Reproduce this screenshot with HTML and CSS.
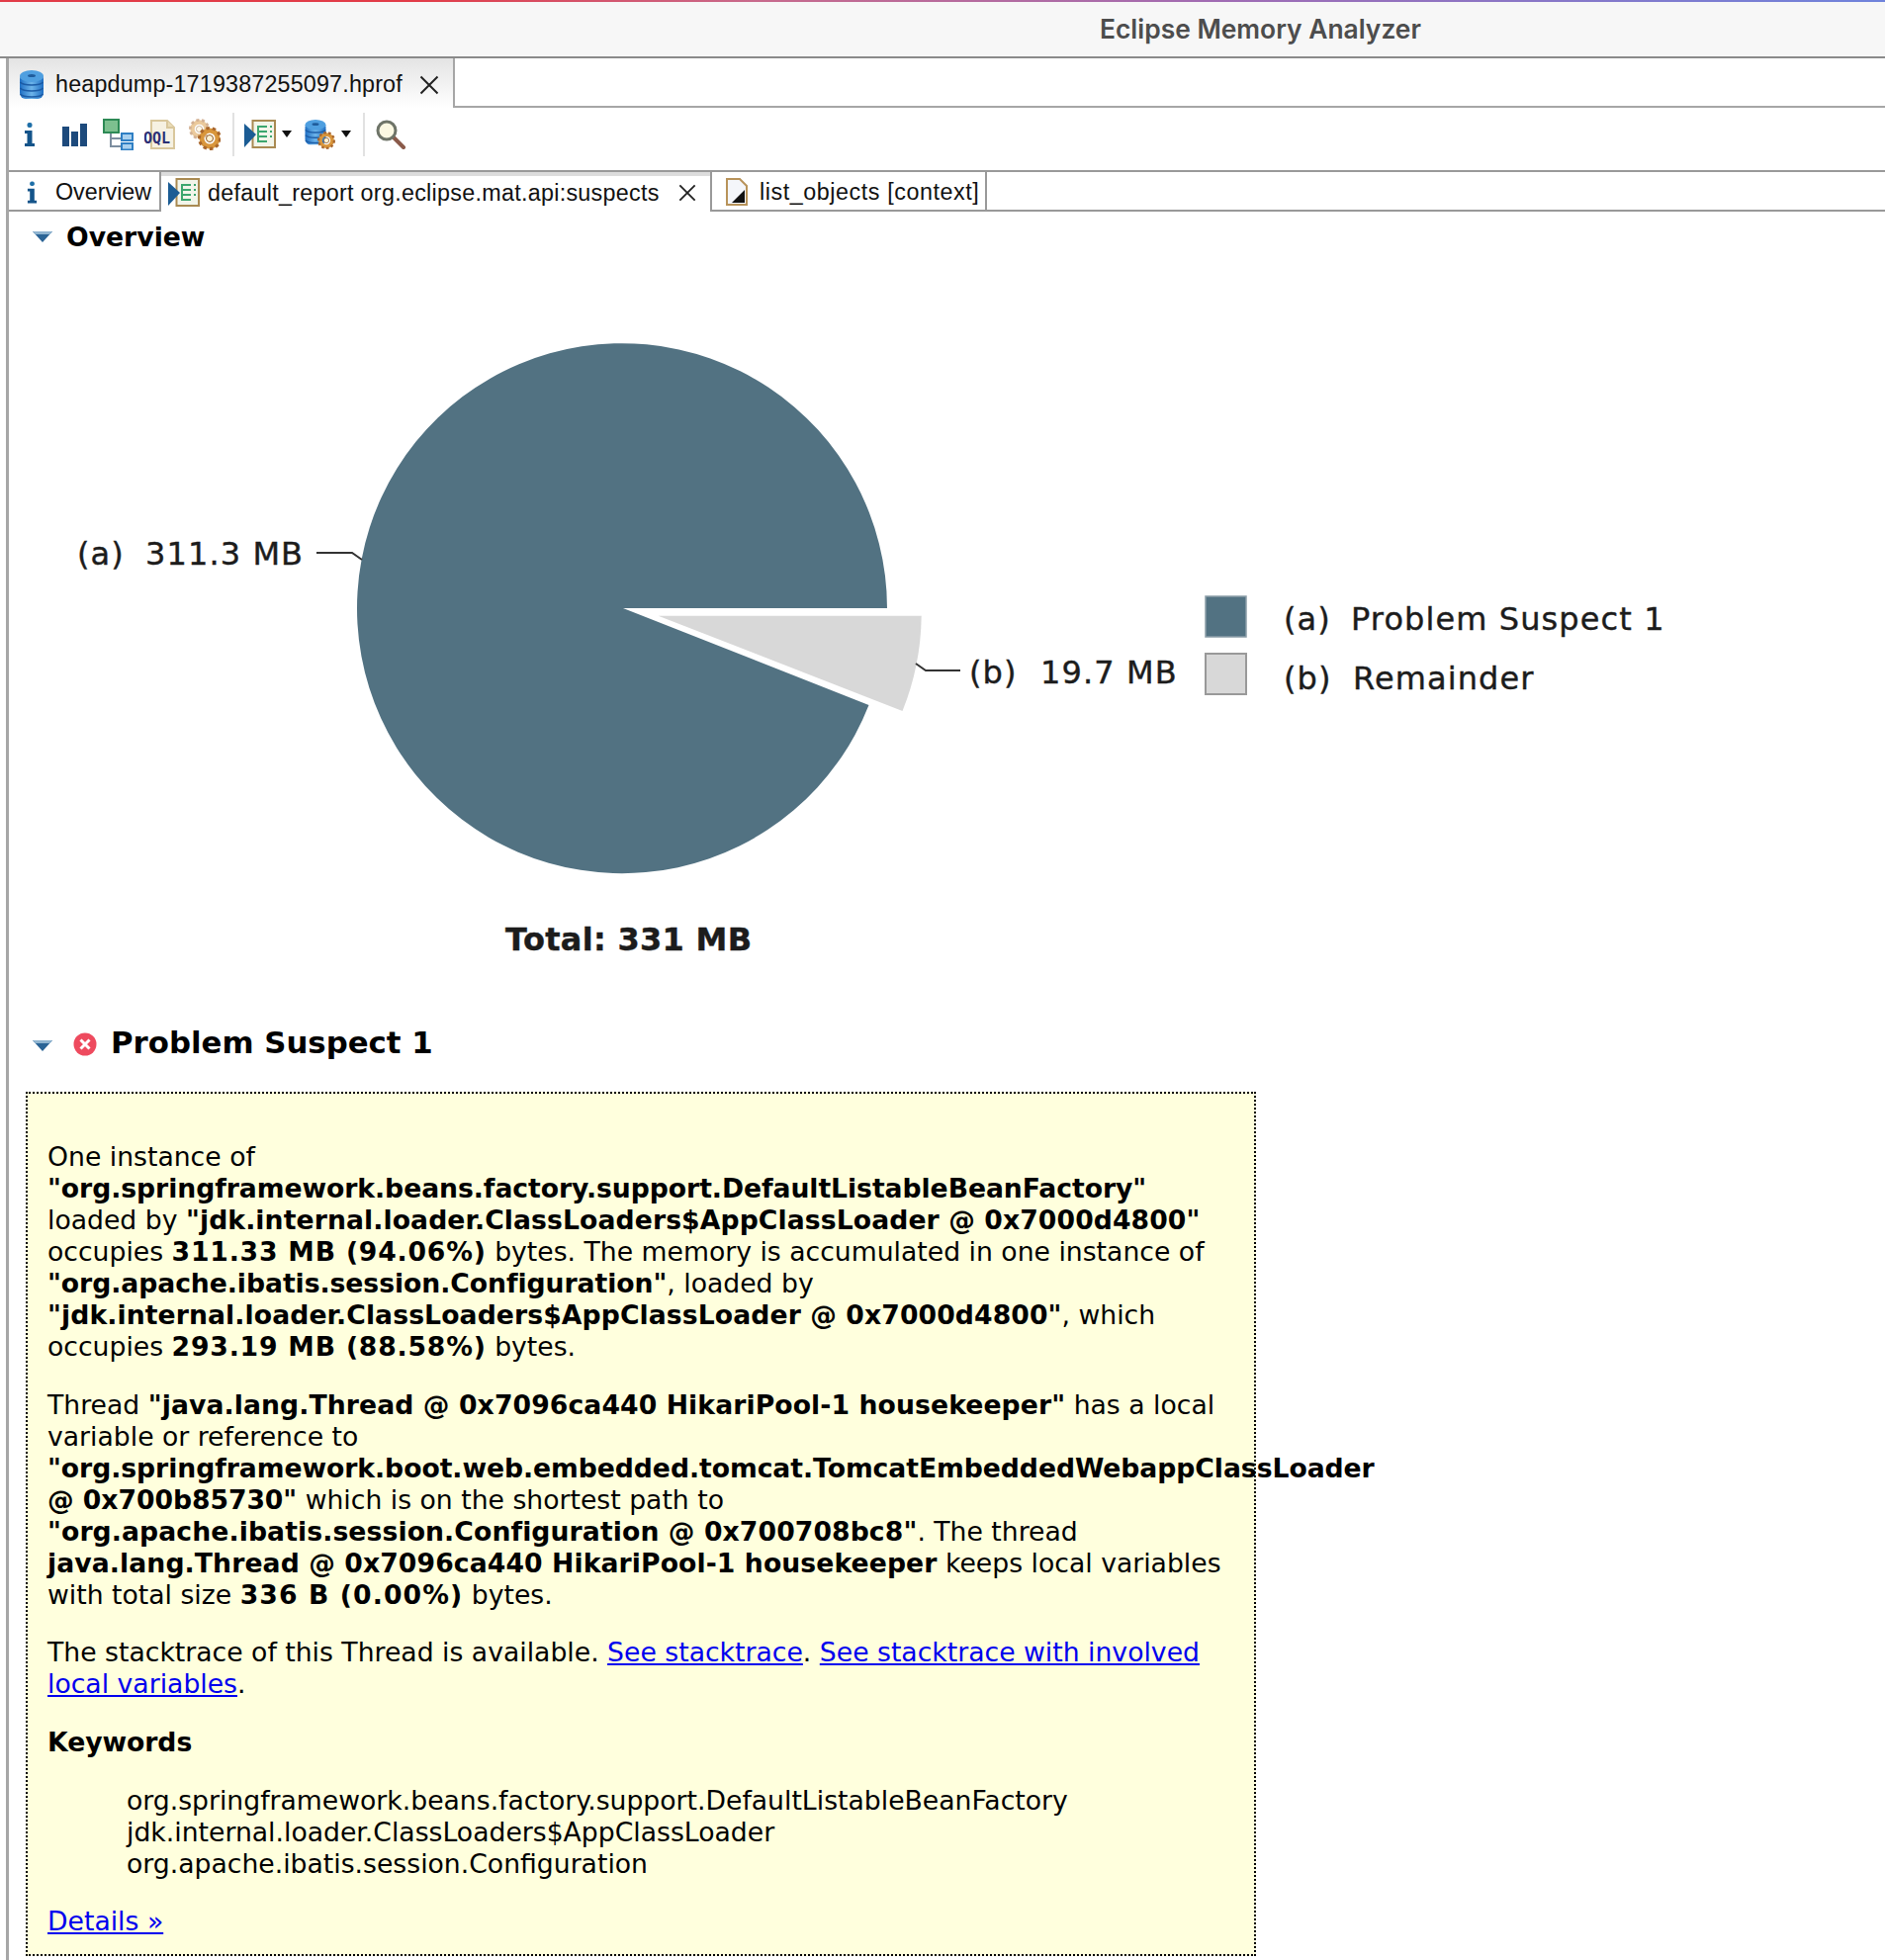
FILE: index.html
```html
<!DOCTYPE html>
<html lang="en">
<head>
  <meta charset="UTF-8">
  <title>Eclipse Memory Analyzer</title>
  <link rel="stylesheet" href="styles.css">
</head>
<body>
  <svg class="defs" width="0" height="0">
    <defs>
      <linearGradient id="dbBlue" x1="0" y1="0" x2="1" y2="0">
        <stop offset="0" stop-color="#1f6fc4"/>
        <stop offset="0.5" stop-color="#6db4ea"/>
        <stop offset="1" stop-color="#1f6fc4"/>
      </linearGradient>
      <symbol id="db" viewBox="0 0 26 32">
        <rect x="1" y="4" width="24" height="26" rx="6" fill="url(#dbBlue)"/>
        <ellipse cx="13" cy="7" rx="12" ry="6" fill="#4f9fe0"/>
        <ellipse cx="13" cy="6.5" rx="4" ry="1.6" fill="#1f5c9c"/>
        <path d="M1.5 13c3 4 20 4 23 0M1.5 19c3 4 20 4 23 0M1.5 25c3 4 20 4 23 0" fill="none" stroke="#1c5ca6" stroke-width="1.6"/>
      </symbol>
      <symbol id="info" viewBox="0 0 12 24">
        <rect x="3.5" y="0" width="5" height="5" rx="2" fill="#1e6fa8"/>
        <path d="M1 8h7.5v13H11v3H1v-3h2.500V11H1z" fill="#14548a"/>
      </symbol>
      <symbol id="report" viewBox="0 0 32 30">
        <rect x="8.500" y="1" width="22.500" height="27" fill="#f2f5ea" stroke="#a98a52" stroke-width="2"/>
        <path d="M14 6v17M14 7h9M14 12h9M14 17h9M14 22h9" stroke="#3ca66e" stroke-width="2" fill="none"/>
        <path d="M26 7h2M26 12h2M26 17h2" stroke="#3ca66e" stroke-width="2"/>
        <path d="M0 4l12 11L0 28z" fill="#1b5c94"/>
      </symbol>
      <symbol id="gear" viewBox="0 0 24 24">
        <circle cx="12" cy="12" r="8" fill="none" stroke="#d9963c" stroke-width="5"/>
        <circle cx="12" cy="12" r="10.500" fill="none" stroke="#a9662c" stroke-width="3" stroke-dasharray="3.500 3"/>
        <circle cx="12" cy="12" r="3.500" fill="#fff3d4" stroke="#8c5a2a" stroke-width="1"/>
      </symbol>
      <symbol id="close" viewBox="0 0 20 20">
        <path d="M1.500 1.500l17 17M18.500 1.500l-17 17" stroke="#222" stroke-width="2" fill="none"/>
      </symbol>
      <symbol id="twisty" viewBox="0 0 20 11">
        <path d="M0 0h20L10 11z" fill="#2b6496"/>
        <path d="M0 0h20l-2.500 3H2.500z" fill="#8fb4d0"/>
      </symbol>
    </defs>
  </svg>

  <div class="accent"></div>
  <header class="titlebar">Eclipse Memory Analyzer</header>

  <div class="editor">
    <div class="filetabs">
      <div class="filetab">
        <svg class="ic-db"><use href="#db"/></svg>
        <span>heapdump-1719387255097.hprof</span>
        <svg class="ic-close"><use href="#close"/></svg>
      </div>
    </div>

    <div class="toolbar">
      <svg class="tool tool-info" viewBox="0 0 32 24"><use href="#info" x="10" width="12" height="24"/></svg>
      <svg class="tool" viewBox="0 0 32 24">
        <path d="M4 4h7v20H4zM13 9h7v15h-7zM22 1h7v23h-7z" fill="#1d4a7c"/>
      </svg>
      <svg class="tool tool-tall" viewBox="0 0 32 32">
        <path d="M8 14v14h10M8 20h10" fill="none" stroke="#7d8ea0" stroke-width="2"/>
        <rect x="1" y="1" width="15" height="13" fill="#7dc08f" stroke="#2d8a55" stroke-width="2"/>
        <rect x="19" y="15" width="11" height="7" fill="#a9d0ee" stroke="#2f7fc4" stroke-width="2"/>
        <rect x="19" y="25" width="11" height="6.500" fill="#a9d0ee" stroke="#2f7fc4" stroke-width="2"/>
      </svg>
      <svg class="tool tool-oql" viewBox="0 0 32 30">
        <path d="M7 1h16l7 7v21H7z" fill="#f6f1e2" stroke="#d9c79c" stroke-width="2"/>
        <path d="M23 1v7h7" fill="#e9dcb8" stroke="#d9c79c" stroke-width="2"/>
        <text class="oql" x="-1" y="24">OQL</text>
      </svg>
      <svg class="tool tool-tall" viewBox="0 0 32 32">
        <use href="#gear" x="0" y="0" width="21" height="21" opacity="0.5"/>
        <use href="#gear" x="9" y="8" width="24" height="24"/>
      </svg>
      <div class="sep"></div>
      <svg class="tool tool-report"><use href="#report"/></svg>
      <div class="drop"></div>
      <svg class="tool tool-dbgear" viewBox="0 0 32 32">
        <use href="#db" x="0" y="0" width="24" height="28"/>
        <use href="#gear" x="14" y="13" width="18" height="18"/>
      </svg>
      <div class="drop"></div>
      <div class="sep"></div>
      <svg class="tool tool-search" viewBox="0 0 30 30">
        <path d="M18 18l10 10" stroke="#8a5a4a" stroke-width="4" stroke-linecap="round"/>
        <circle cx="11" cy="11" r="9" fill="#fbf8e2" stroke="#6e7468" stroke-width="3"/>
      </svg>
    </div>

    <div class="subtabs">
      <div class="subtab subtab-first">
        <svg class="ic-info"><use href="#info"/></svg>
        <span>Overview</span>
      </div>
      <div class="subtab subtab-active">
        <svg class="ic-report"><use href="#report"/></svg>
        <span>default_report org.eclipse.mat.api:suspects</span>
        <svg class="ic-close ic-close-sm"><use href="#close"/></svg>
      </div>
      <div class="subtab subtab-last">
        <svg class="ic-page" viewBox="0 0 24 28">
          <path d="M2 1h13l7 7v19H2z" fill="#f4f6fa" stroke="#b8935a" stroke-width="2"/>
          <path d="M20 12v13H7z" fill="#111"/>
        </svg>
        <span>list_objects [context]</span>
      </div>
    </div>

    <main class="report">
      <h2 class="section-head">
        <svg class="ic-twisty"><use href="#twisty"/></svg>
        <span>Overview</span>
      </h2>

      <svg class="chart" viewBox="9 265 1700 720">
        <path class="slice-a" d="M630 614 L897 614 A268 268 0 1 0 878.500 712 Z"/>
        <path class="slice-b" d="M665.600 621.700 L931.700 621.700 A266 266 0 0 1 912.500 718 Z"/>
        <path class="leader" d="M320 558 H356 L366 565"/>
        <path class="leader" d="M926 670 L936 677 H971"/>
        <text class="label" x="78" y="570">(a)</text>
        <text class="label" x="147" y="570">311.3 MB</text>
        <text class="label" x="980" y="690">(b)</text>
        <text class="label" x="1052" y="690">19.7 MB</text>
        <text class="label total" x="511" y="960">Total: 331 MB</text>
        <rect class="swatch-a" x="1219" y="602" width="41" height="41"/>
        <rect class="swatch-b" x="1219" y="660" width="41" height="41"/>
        <text class="label" x="1298" y="636">(a)</text>
        <text class="label" x="1366" y="636">Problem Suspect 1</text>
        <text class="label" x="1298" y="696">(b)</text>
        <text class="label" x="1368" y="696">Remainder</text>
      </svg>

      <h2 class="section-head section-head-big">
        <svg class="ic-twisty"><use href="#twisty"/></svg>
        <svg class="ic-error" viewBox="0 0 24 24">
          <circle cx="12" cy="12" r="11.500" fill="#ee4a5e"/>
          <path d="M7.500 7.500l9 9M16.500 7.500l-9 9" stroke="#fff" stroke-width="3"/>
        </svg>
        <span>Problem Suspect 1</span>
      </h2>

      <section class="suspect">
        <p>One instance of <b>"org.springframework.beans.factory.support.DefaultListableBeanFactory"</b> loaded by <b class="addr">"jdk.internal.loader.ClassLoaders$AppClassLoader @ 0x7000d4800"</b> occupies <b class="stat">311.33 MB (94.06%)</b> bytes. The memory is accumulated in one instance of <b>"org.apache.ibatis.session.Configuration"</b>, loaded by <b class="addr">"jdk.internal.loader.ClassLoaders$AppClassLoader @ 0x7000d4800"</b>, which occupies <b class="stat">293.19 MB (88.58%)</b> bytes.</p>
        <p>Thread <b class="addr">"java.lang.Thread @ 0x7096ca440 HikariPool-1 housekeeper"</b> has a local variable or reference to <b>"org.springframework.boot.web.embedded.tomcat.TomcatEmbeddedWebappClassLoader @ 0x700b85730"</b> which is on the shortest path to <b class="addr">"org.apache.ibatis.session.Configuration @ 0x700708bc8"</b>. The thread <b class="addr">java.lang.Thread @ 0x7096ca440 HikariPool-1 housekeeper</b> keeps local variables with total size <b class="stat stat-short">336 B (0.00%)</b> bytes.</p>
        <p>The stacktrace of this Thread is available. <a href="#">See stacktrace</a>. <a href="#">See stacktrace with involved local variables</a>.</p>
        <p><b>Keywords</b></p>
        <ul class="keywords">
          <li>org.springframework.beans.factory.support.DefaultListableBeanFactory</li>
          <li>jdk.internal.loader.ClassLoaders$AppClassLoader</li>
          <li>org.apache.ibatis.session.Configuration</li>
        </ul>
        <p><a href="#">Details »</a></p>
      </section>
    </main>
  </div>
</body>
</html>
```

FILE: styles.css
```css
html, body {
  margin: 0;
  padding: 0;
  background: #fff;
}
body {
  width: 1906px;
  height: 1982px;
  overflow: hidden;
  font-family: "Liberation Sans", Arial, sans-serif;
  color: #111;
}
.defs {
  position: absolute;
}

/* window title */
.accent {
  height: 2px;
  background: linear-gradient(90deg, #e23c48 0%, #e23c48 22%, #c86a8c 40%, #a06cb4 65%, #6f83dc 100%);
}
.titlebar {
  height: 55px;
  line-height: 54px;
  background: #f7f7f7;
  border-bottom: 2px solid #8a8a8a;
  padding-left: 1112px;
  font-family: Inter, sans-serif;
  font-size: 26.400px;
  font-weight: 600;
  color: #4d4d4d;
}

.editor {
  margin-left: 6px;
  border-left: 3px solid #a6a6a6;
}

/* heap dump tab */
.filetabs {
  height: 48px;
  border-bottom: 2px solid #a6a6a6;
  display: flex;
}
.filetab {
  width: 451px;
  height: 50px;
  box-sizing: border-box;
  border-right: 2px solid #a6a6a6;
  background: linear-gradient(#e4e4e4, #fff);
  display: flex;
  align-items: center;
  padding: 3px 0 0 10px;
  font-size: 23.300px;
  letter-spacing: 0.18px;
}
.ic-db {
  width: 26px;
  height: 32px;
  margin-right: 11px;
}
.ic-close {
  width: 20px;
  height: 20px;
  margin-left: 17px;
}

/* toolbar */
.toolbar {
  height: 53px;
  padding: 0 0 10px 5px;
  display: flex;
  align-items: center;
}
.tool {
  width: 32px;
  height: 26px;
  margin-left: 13px;
  flex: none;
}
.toolbar .tool:first-child {
  margin-left: 0;
}
.tool-tall {
  height: 32px;
}
.tool-oql {
  height: 30px;
  margin-left: 10px;
}
.oql {
  font: bold 15px "DejaVu Sans Mono", monospace;
  fill: #2b2f74;
}
.sep {
  width: 2px;
  height: 44px;
  margin: 0 10px 0 12px;
  background: #e2e2e2;
}
.drop + .sep {
  margin-left: 0;
}
.tool-report {
  height: 30px;
  margin-left: 0;
}
.tool-dbgear {
  height: 32px;
  margin-left: 0;
}
.tool-search {
  height: 30px;
  margin-left: 0;
}
.drop {
  width: 0;
  height: 0;
  margin: 0 12px 0 6px;
  border-left: 5px solid transparent;
  border-right: 5px solid transparent;
  border-top: 7px solid #111;
}

/* report tabs */
.subtabs {
  height: 38px;
  border-top: 2px solid #999;
  border-bottom: 2px solid #999;
  display: flex;
  font-size: 23.300px;
}
.subtab {
  display: flex;
  align-items: center;
  box-sizing: border-box;
  height: 38px;
  padding-top: 2px;
}
.subtab-first {
  width: 154px;
  padding-left: 18px;
  border-right: 2px solid #999;
  border-top-left-radius: 6px;
}
.subtab-active {
  width: 557px;
  height: 40px;
  padding-left: 7px;
  background: linear-gradient(#dcdcdc 4px, #fff 4px);
  border-right: 2px solid #999;
  letter-spacing: 0.29px;
}
.subtab-last {
  width: 278px;
  padding-left: 13px;
  border-right: 2px solid #999;
  letter-spacing: 0.57px;
}
.ic-info {
  width: 11px;
  height: 23px;
  margin-right: 18px;
}
.ic-report {
  width: 32px;
  height: 30px;
  margin-right: 8px;
}
.ic-close-sm {
  margin-left: 19px;
  width: 18px;
  height: 18px;
}
.ic-page {
  width: 24px;
  height: 28px;
  margin-right: 11px;
}

/* report body */
.report {
  height: 1768px;
}
.section-head {
  margin: 0;
  height: 50px;
  padding-bottom: 2px;
  display: flex;
  align-items: center;
  padding-left: 24px;
  font-family: "DejaVu Sans", Verdana, sans-serif;
  font-size: 26.670px;
  font-weight: 700;
  color: #000;
}
.ic-twisty {
  width: 20px;
  height: 11px;
  margin-right: 14px;
}
.section-head-big {
  height: 118px;
  box-sizing: border-box;
  padding: 18px 0 0 24px;
  font-size: 30.800px;
}
.section-head-big .ic-twisty {
  margin: 6px 21px 0 0;
}
.ic-error {
  width: 24px;
  height: 24px;
  margin: 4px 14px 0 0;
}
.chart {
  display: block;
  width: 1700px;
  height: 720px;
}
.slice-a, .swatch-a {
  fill: #527282;
}
.slice-b {
  fill: #d8d8d8;
}
.swatch-a {
  stroke: #8c9ea8;
  stroke-width: 1.500;
}
.swatch-b {
  fill: #d8d8d8;
  stroke: #999;
  stroke-width: 2;
}
.leader {
  fill: none;
  stroke: #333;
  stroke-width: 2;
}
.label {
  font-family: "DejaVu Sans", sans-serif;
  font-size: 32px;
  letter-spacing: 1.100px;
  fill: #1c1c1c;
  stroke: #1c1c1c;
  stroke-width: 0.4;
}
.total {
  font-weight: 700;
  letter-spacing: 0.3px;
}

/* suspect box */
.suspect {
  margin-left: 17px;
  width: 1244px;
  height: 874px;
  box-sizing: border-box;
  padding: 48px 20px 0;
  border: 2px dotted #000;
  background: #ffffdd;
  font-family: "DejaVu Sans", Verdana, sans-serif;
  font-size: 26.670px;
  line-height: 32px;
  color: #000;
}
.suspect p {
  margin: 0 0 26.670px;
}
.suspect b {
  letter-spacing: -0.06px;
}
.suspect b.addr {
  letter-spacing: 0.09px;
}
.suspect b.stat {
  letter-spacing: 0.8px;
}
.suspect b.stat-short {
  letter-spacing: 1.100px;
}
.suspect a {
  color: #0000ee;
}
.keywords {
  list-style: none;
  margin: 0 0 26.670px;
  padding-left: 80px;
}
```
